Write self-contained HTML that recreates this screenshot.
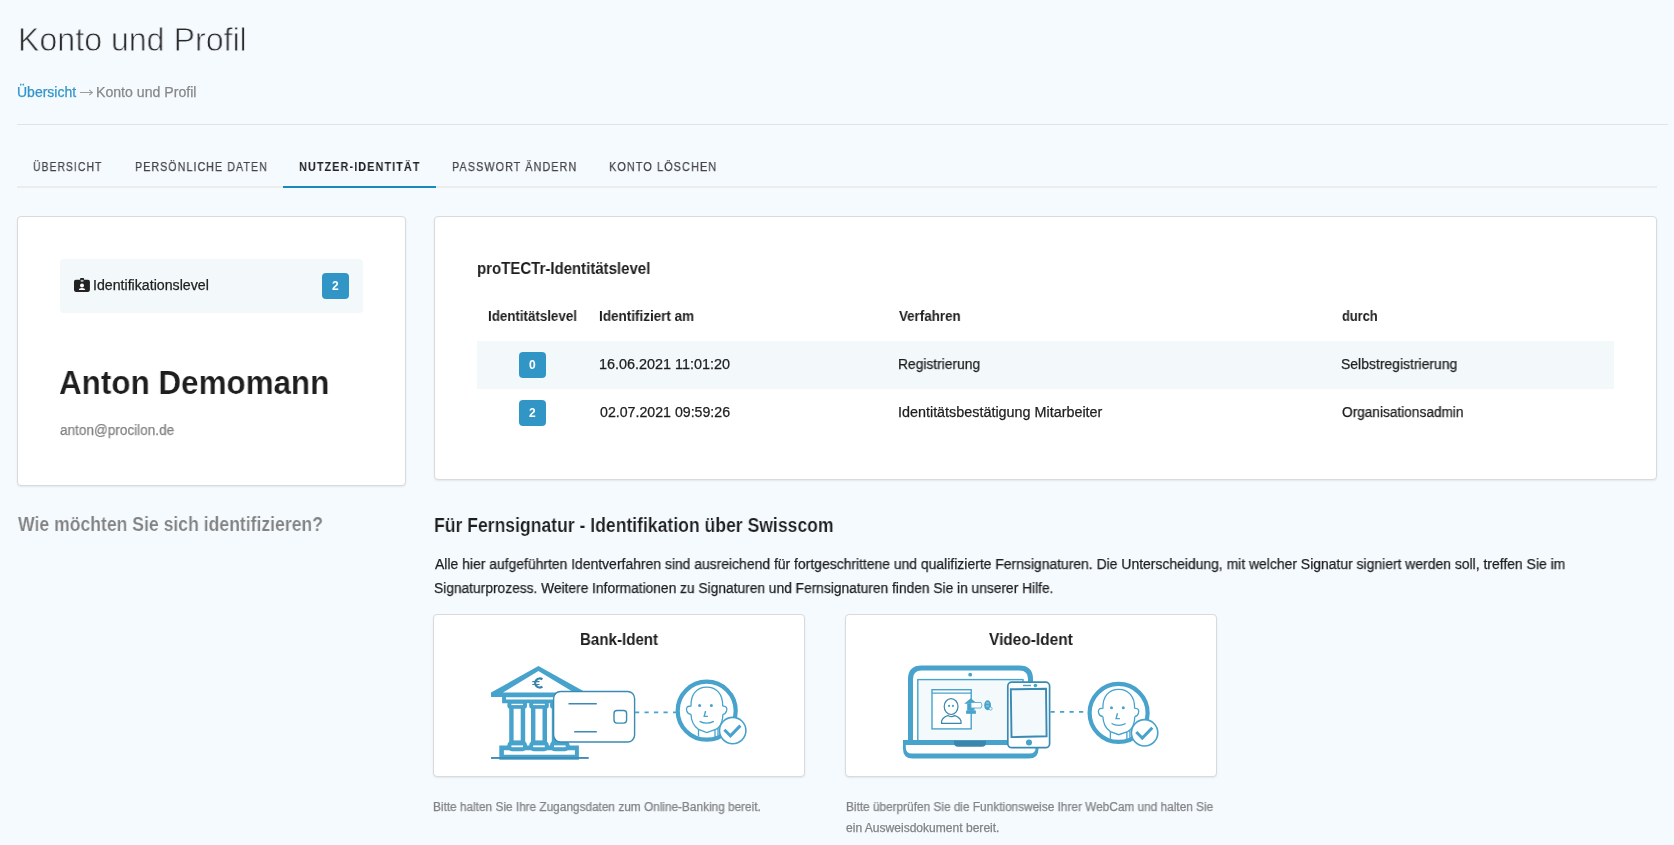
<!DOCTYPE html>
<html lang="de"><head><meta charset="utf-8"><title>Konto und Profil</title>
<style>
html,body{margin:0;padding:0;}
body{width:1674px;height:845px;overflow:hidden;background:#f5faff;position:relative;font-family:"Liberation Sans",sans-serif;}
.t{position:absolute;white-space:nowrap;line-height:1;transform-origin:0 0;will-change:transform;font-family:"Liberation Sans",sans-serif;}
.box{position:absolute;box-sizing:border-box;}
.card{position:absolute;box-sizing:border-box;background:#fff;border:1px solid #d8dadc;border-radius:4px;box-shadow:0 1px 2px rgba(0,0,0,0.08);}
.badge{position:absolute;width:27px;height:26px;border-radius:4px;background:#3196c6;}
svg{position:absolute;left:0;top:0;}
</style></head><body>

<div class="box" style="left:17px;top:124px;width:1651px;height:1px;background:#e1e3e4"></div>
<div class="box" style="left:17px;top:186px;width:1640px;height:2px;background:#ececec"></div>
<div class="box" style="left:283px;top:186px;width:153px;height:2px;background:#1a89bf"></div>
<div class="card" style="left:17px;top:216px;width:389px;height:270px"></div>
<div class="box" style="left:60px;top:259px;width:303px;height:54px;background:#f3f8fb;border-radius:4px"></div>
<div class="badge" style="left:322px;top:273px"></div>
<div class="card" style="left:434px;top:216px;width:1223px;height:264px"></div>
<div class="box" style="left:477px;top:341px;width:1137px;height:48px;background:#f3f8fb"></div>
<div class="badge" style="left:519px;top:352px"></div>
<div class="badge" style="left:519px;top:400px"></div>
<div class="card" style="left:433px;top:614px;width:372px;height:163px"></div>
<div class="card" style="left:845px;top:614px;width:372px;height:163px"></div>
<svg width="1674" height="845" viewBox="0 0 1674 845">
 <path d="M80 92.5 L92.3 92.5 M89.2 89.9 L92.4 92.5 L89.2 95.1" fill="none" stroke="#9c9c9c" stroke-width="1.1"/>
 <g transform="translate(74 278)">
  <rect x="0" y="1.7" width="15.9" height="12.2" rx="1.8" fill="#222"/>
  <rect x="6.1" y="0" width="4" height="3.6" rx="0.8" fill="#222"/>
  <rect x="6.7" y="1.9" width="2.8" height="1.8" fill="#bbb"/>
  <circle cx="8" cy="7.6" r="2" fill="#fff"/>
  <path d="M4.8 12.1 Q5 9.9 8 9.9 Q11 9.9 11.2 12.1 Z" fill="#fff"/>
 </g>
 
<g fill="#47a3cc">
 <path d="M499.3 745.5 L578.9 745.5 L578.9 759.7 L499.3 759.7 Z M503.9 750.3 L574.9 750.3 L574.9 754.8 L503.9 754.8 Z" fill-rule="evenodd"/>
 <path d="M538.4 666 L586 692.5 L586 697 L491 697 L491 692.5 Z M538.4 671 L503 692.5 L574 692.5 Z" fill-rule="evenodd"/>
 <path d="M502.1 696 L576 696 L576 703.3 L502.1 703.3 Z M506 697.2 L576 697.2 L576 699.4 L506 699.4 Z" fill-rule="evenodd"/>
 <rect x="507.4" y="701.2" width="19.6" height="7.6" rx="3"/><rect x="509.2" y="706" width="16" height="36"/><rect x="507.4" y="740.6" width="19.6" height="10.6" rx="4.6"/><rect x="529.2" y="701.2" width="19.6" height="7.6" rx="3"/><rect x="531.0" y="706" width="16" height="36"/><rect x="529.2" y="740.6" width="19.6" height="10.6" rx="4.6"/><rect x="550.0" y="701.2" width="19.6" height="7.6" rx="3"/><rect x="551.8" y="706" width="16" height="36"/><rect x="550.0" y="740.6" width="19.6" height="10.6" rx="4.6"/>
</g>
<g fill="#fff"><rect x="513.6" y="708.8" width="7.1" height="31.6"/><rect x="511.4" y="703.8" width="11.6" height="1.3"/><rect x="511.4" y="745.4" width="11.6" height="1.8"/><rect x="535.4" y="708.8" width="7.1" height="31.6"/><rect x="533.2" y="703.8" width="11.6" height="1.3"/><rect x="533.2" y="745.4" width="11.6" height="1.8"/><rect x="556.2" y="708.8" width="7.1" height="31.6"/><rect x="554.0" y="703.8" width="11.6" height="1.3"/><rect x="554.0" y="745.4" width="11.6" height="1.8"/></g>
<rect x="491" y="757" width="97.7" height="1.9" fill="#3f8db5"/>
<path d="M542.4 679.4 A4.5 4.5 0 1 0 542.4 686.6" fill="none" stroke="#3683ab" stroke-width="2.3"/><path d="M532.3 681.7 L539.5 681.7 M532.3 684.5 L539.5 684.5" stroke="#3683ab" stroke-width="1.2"/>
<rect x="553.6" y="691.5" width="81" height="50.5" rx="7" fill="#fff" stroke="#3a8ab3" stroke-width="1.4"/>
<path d="M568.5 703.7 L596.8 703.7 M574.2 731.8 L596.8 731.8" stroke="#3a8ab3" stroke-width="1.5"/>
<rect x="614" y="710.5" width="12.6" height="12.6" rx="3" fill="none" stroke="#3a8ab3" stroke-width="1.4"/>
<path d="M635 712.4 L676 712.4" stroke="#47a3cc" stroke-width="1.6" stroke-dasharray="4.2 5.3"/>

<g fill="none" stroke="#47a3cc">
 <circle cx="706.7" cy="710.7" r="29" stroke-width="4.2"/>
 <path stroke-width="1.3" d="M691 706.5 C690.5 694 697 687.2 706.8 687.2 C716.5 687.2 723 694 722.7 706.2 M690.8 706.4 C687 705.5 685.8 708.5 686.8 711 C687.6 713.3 689.5 714.3 691 714.3 M722.6 706.2 C726.5 705.5 727.5 708.5 726.5 711 C725.7 713.3 724.3 714.3 722.9 714.3 M691 714.3 C691.2 721 693.5 726 698.5 729.4 L706.8 732.5 L715.7 729.4 C717.5 728.5 718.5 727.5 719.5 726.3 M722.9 714.3 C722.8 719 722 723 719.5 726.3 M698.5 729.4 L698.5 736.5 M715 729.6 L715 737 M718 728 L718 735.5"/>
 <path stroke-width="1.4" d="M699.6 721.3 Q706.7 725 713.8 721.3"/>
 <path stroke-width="1.4" d="M705.6 711 L704.2 716.4 L708 716.4"/>
</g>
<g fill="#47a3cc"><circle cx="699.6" cy="705.5" r="1.5"/><circle cx="711.4" cy="705.5" r="1.5"/></g>
<circle cx="732.7" cy="730.6" r="13.2" fill="#fff" stroke="#47a3cc" stroke-width="1.6"/>
<path d="M724.4 729.8 L730.4 735.9 L740.4 725.6" fill="none" stroke="#47a3cc" stroke-width="3"/>

 
<path fill="none" stroke="#47a3cc" stroke-width="5" d="M910.5 741 L910.5 679 Q910.5 668 921.5 668 L1019.5 668 Q1030.5 668 1030.5 679 L1030.5 741"/>
<rect x="917.8" y="679.6" width="105.2" height="61.5" fill="#f4f9fc" stroke="#47a3cc" stroke-width="1.4"/>
<path fill="#47a3cc" fill-rule="evenodd" d="M903 740.1 L1038.5 740.1 L1038.5 749 Q1038.5 758.6 1029 758.6 L912.5 758.6 Q903 758.6 903 749 Z M905.8 745.1 L1035.7 745.1 L1035.7 747.6 Q1035.7 753.6 1029.7 753.6 L911.8 753.6 Q905.8 753.6 905.8 747.6 Z"/>
<path d="M954 740.8 L986 740.8 L986 742.8 Q986 746.8 982 746.8 L958 746.8 Q954 746.8 954 742.8 Z" fill="#3a86ad"/>
<circle cx="970.2" cy="674.7" r="1.9" fill="#47a3cc"/>
<rect x="932" y="689.7" width="39.2" height="39.2" fill="#fff" stroke="#47a3cc" stroke-width="1.4"/>
<path d="M932 693.1 L971.2 693.1" stroke="#47a3cc" stroke-width="1.2"/>
<g fill="none" stroke="#3a86ad" stroke-width="1.2">
 <ellipse cx="951.1" cy="706.6" rx="6.9" ry="7.9"/>
 <path d="M941.6 723.4 L941.6 721 Q943 717 947.8 715.6 Q951 717.6 954.7 715.6 Q959.6 717 961 721 L961 723.4 Z"/>
</g>
<g fill="#47a3cc"><circle cx="949.1" cy="705.9" r="1.1"/><circle cx="952.9" cy="705.9" r="1.1"/></g>
<g fill="#47a3cc">
 <path d="M964.2 703.7 L970.8 698.2 L977.3 703.7 Z"/>
 <rect x="967.2" y="703.5" width="7.3" height="7.2"/>
 <rect x="966.1" y="710.5" width="9.8" height="3.3"/>
</g>
<path d="M971 702.5 L981 702.5 Q983 705 981 708 L971 708 Z" fill="#fff" stroke="#5aaad0" stroke-width="0.9"/>
<ellipse cx="987.6" cy="705.3" rx="3.4" ry="5" fill="#47a3cc"/>
<path d="M986 703 L989 703 M986 706 L989 706" stroke="#bfe0ef" stroke-width="0.8"/>
<circle cx="990.6" cy="708.6" r="1.5" fill="#fff" stroke="#47a3cc" stroke-width="0.8"/>
<rect x="1007.8" y="682.2" width="41.8" height="65.5" rx="4" fill="#fff" stroke="#3a8ab3" stroke-width="1.7"/>
<path d="M1010.8 689.3 L1046 688.7 L1046.6 736.3 L1011.5 737.1 Z" fill="#f4f9fc" stroke="#3a8ab3" stroke-width="1.9"/>
<path d="M1023 685.5 L1031 685.5" stroke="#47a3cc" stroke-width="1.4"/>
<circle cx="1035.4" cy="685.5" r="1.8" fill="#47a3cc"/>
<circle cx="1029" cy="742.6" r="3" fill="#47a3cc"/>
<path d="M1050.5 711.9 L1088 711.9" stroke="#47a3cc" stroke-width="1.6" stroke-dasharray="4.2 5.3"/>
<g transform="translate(411.9 2.2)">
<g fill="none" stroke="#47a3cc">
 <circle cx="706.7" cy="710.7" r="29" stroke-width="4.2"/>
 <path stroke-width="1.3" d="M691 706.5 C690.5 694 697 687.2 706.8 687.2 C716.5 687.2 723 694 722.7 706.2 M690.8 706.4 C687 705.5 685.8 708.5 686.8 711 C687.6 713.3 689.5 714.3 691 714.3 M722.6 706.2 C726.5 705.5 727.5 708.5 726.5 711 C725.7 713.3 724.3 714.3 722.9 714.3 M691 714.3 C691.2 721 693.5 726 698.5 729.4 L706.8 732.5 L715.7 729.4 C717.5 728.5 718.5 727.5 719.5 726.3 M722.9 714.3 C722.8 719 722 723 719.5 726.3 M698.5 729.4 L698.5 736.5 M715 729.6 L715 737 M718 728 L718 735.5"/>
 <path stroke-width="1.4" d="M699.6 721.3 Q706.7 725 713.8 721.3"/>
 <path stroke-width="1.4" d="M705.6 711 L704.2 716.4 L708 716.4"/>
</g>
<g fill="#47a3cc"><circle cx="699.6" cy="705.5" r="1.5"/><circle cx="711.4" cy="705.5" r="1.5"/></g>
<circle cx="732.7" cy="730.6" r="13.2" fill="#fff" stroke="#47a3cc" stroke-width="1.6"/>
<path d="M724.4 729.8 L730.4 735.9 L740.4 725.6" fill="none" stroke="#47a3cc" stroke-width="3"/>
</g>

</svg>
<div class="t" style="left:18.05px;top:23px;font-size:33px;font-weight:normal;color:#2a2a2a;letter-spacing:0px;transform:scaleX(0.9740);-webkit-text-stroke:0.8px #f5faff">Konto und Profil</div>
<div class="t" style="left:17.00px;top:85px;font-size:14px;font-weight:normal;color:#3395c8;letter-spacing:0px;transform:scaleX(1.0000);-webkit-text-stroke:0.25px #3395c8">Übersicht</div>
<div class="t" style="left:95.99px;top:85px;font-size:14px;font-weight:normal;color:#888;letter-spacing:0px;transform:scaleX(1.0082);-webkit-text-stroke:0.25px #888">Konto und Profil</div>
<div class="t" style="left:33.00px;top:160px;font-size:13px;font-weight:normal;color:#444;letter-spacing:1.3px;transform:scaleX(0.7988);-webkit-text-stroke:0.25px #444">ÜBERSICHT</div>
<div class="t" style="left:134.68px;top:160px;font-size:13px;font-weight:normal;color:#444;letter-spacing:1.3px;transform:scaleX(0.8208);-webkit-text-stroke:0.25px #444">PERSÖNLICHE DATEN</div>
<div class="t" style="left:298.57px;top:160px;font-size:13px;font-weight:bold;color:#222;letter-spacing:1.3px;transform:scaleX(0.8340);">NUTZER-IDENTITÄT</div>
<div class="t" style="left:451.87px;top:160px;font-size:13px;font-weight:normal;color:#444;letter-spacing:1.3px;transform:scaleX(0.8304);-webkit-text-stroke:0.25px #444">PASSWORT ÄNDERN</div>
<div class="t" style="left:608.66px;top:160px;font-size:13px;font-weight:normal;color:#444;letter-spacing:1.3px;transform:scaleX(0.8365);-webkit-text-stroke:0.25px #444">KONTO LÖSCHEN</div>
<div class="t" style="left:93.19px;top:278px;font-size:14px;font-weight:normal;color:#1e1e1e;letter-spacing:0px;transform:scaleX(1.0124);-webkit-text-stroke:0.25px #1e1e1e">Identifikationslevel</div>
<div class="t" style="left:59.45px;top:366px;font-size:33px;font-weight:bold;color:#1e1e1e;letter-spacing:0px;transform:scaleX(0.9514);-webkit-text-stroke:0.15px #fff">Anton Demomann</div>
<div class="t" style="left:60.40px;top:423px;font-size:14px;font-weight:normal;color:#828282;letter-spacing:0px;transform:scaleX(0.9695);-webkit-text-stroke:0.25px #828282">anton@procilon.de</div>
<div class="t" style="left:476.56px;top:261px;font-size:16px;font-weight:bold;color:#1e1e1e;letter-spacing:0px;transform:scaleX(0.9372);">proTECTr-Identitätslevel</div>
<div class="t" style="left:487.65px;top:309px;font-size:14px;font-weight:bold;color:#1e1e1e;letter-spacing:0px;transform:scaleX(0.9522);">Identitätslevel</div>
<div class="t" style="left:598.74px;top:309px;font-size:14px;font-weight:bold;color:#1e1e1e;letter-spacing:0px;transform:scaleX(0.9629);">Identifiziert am</div>
<div class="t" style="left:899.20px;top:309px;font-size:14px;font-weight:bold;color:#1e1e1e;letter-spacing:0px;transform:scaleX(0.9547);">Verfahren</div>
<div class="t" style="left:1342.00px;top:309px;font-size:14px;font-weight:bold;color:#1e1e1e;letter-spacing:0px;transform:scaleX(0.9184);">durch</div>
<div class="t" style="left:598.57px;top:357px;font-size:14px;font-weight:normal;color:#1e1e1e;letter-spacing:0px;transform:scaleX(1.0286);-webkit-text-stroke:0.25px #1e1e1e">16.06.2021 11:01:20</div>
<div class="t" style="left:898.21px;top:357px;font-size:14px;font-weight:normal;color:#1e1e1e;letter-spacing:0px;transform:scaleX(0.9854);-webkit-text-stroke:0.25px #1e1e1e">Registrierung</div>
<div class="t" style="left:1341.00px;top:357px;font-size:14px;font-weight:normal;color:#1e1e1e;letter-spacing:0px;transform:scaleX(0.9957);-webkit-text-stroke:0.25px #1e1e1e">Selbstregistrierung</div>
<div class="t" style="left:599.60px;top:405px;font-size:14px;font-weight:normal;color:#1e1e1e;letter-spacing:0px;transform:scaleX(1.0125);-webkit-text-stroke:0.25px #1e1e1e">02.07.2021 09:59:26</div>
<div class="t" style="left:898.17px;top:405px;font-size:14px;font-weight:normal;color:#1e1e1e;letter-spacing:0px;transform:scaleX(1.0258);-webkit-text-stroke:0.25px #1e1e1e">Identitätsbestätigung Mitarbeiter</div>
<div class="t" style="left:1342.00px;top:405px;font-size:14px;font-weight:normal;color:#1e1e1e;letter-spacing:0px;transform:scaleX(0.9758);-webkit-text-stroke:0.25px #1e1e1e">Organisationsadmin</div>
<div class="t" style="left:17.50px;top:514px;font-size:20px;font-weight:bold;color:#828282;letter-spacing:0px;transform:scaleX(0.8801);-webkit-text-stroke:0.15px #f5faff">Wie möchten Sie sich identifizieren?</div>
<div class="t" style="left:433.62px;top:515px;font-size:20px;font-weight:bold;color:#1e1e1e;letter-spacing:0px;transform:scaleX(0.8790);-webkit-text-stroke:0.15px #f5faff">Für Fernsignatur - Identifikation über Swisscom</div>
<div class="t" style="left:434.50px;top:557px;font-size:14px;font-weight:normal;color:#1e1e1e;letter-spacing:0px;transform:scaleX(0.9943);-webkit-text-stroke:0.25px #1e1e1e">Alle hier aufgeführten Identverfahren sind ausreichend für fortgeschrittene und qualifizierte Fernsignaturen. Die Unterscheidung, mit welcher Signatur signiert werden soll, treffen Sie im</div>
<div class="t" style="left:433.52px;top:581px;font-size:14px;font-weight:normal;color:#1e1e1e;letter-spacing:0px;transform:scaleX(0.9830);-webkit-text-stroke:0.25px #1e1e1e">Signaturprozess. Weitere Informationen zu Signaturen und Fernsignaturen finden Sie in unserer Hilfe.</div>
<div class="t" style="left:579.66px;top:632px;font-size:16px;font-weight:bold;color:#1e1e1e;letter-spacing:0px;transform:scaleX(0.9439);">Bank-Ident</div>
<div class="t" style="left:989.00px;top:632px;font-size:16px;font-weight:bold;color:#1e1e1e;letter-spacing:0px;transform:scaleX(0.9655);">Video-Ident</div>
<div class="t" style="left:433.42px;top:801px;font-size:12px;font-weight:normal;color:#828282;letter-spacing:0px;transform:scaleX(0.9849);-webkit-text-stroke:0.25px #828282">Bitte halten Sie Ihre Zugangsdaten zum Online-Banking bereit.</div>
<div class="t" style="left:845.51px;top:801px;font-size:12px;font-weight:normal;color:#828282;letter-spacing:0px;transform:scaleX(0.9852);-webkit-text-stroke:0.25px #828282">Bitte überprüfen Sie die Funktionsweise Ihrer WebCam und halten Sie</div>
<div class="t" style="left:845.80px;top:822px;font-size:12px;font-weight:normal;color:#828282;letter-spacing:0px;transform:scaleX(1.0046);-webkit-text-stroke:0.25px #828282">ein Ausweisdokument bereit.</div>
<div class="t" style="left:332.00px;top:280px;font-size:12px;font-weight:bold;color:#fff;letter-spacing:0px;transform:scaleX(1.0000);">2</div>
<div class="t" style="left:529.00px;top:359px;font-size:12px;font-weight:bold;color:#fff;letter-spacing:0px;transform:scaleX(1.0000);">0</div>
<div class="t" style="left:529.00px;top:407px;font-size:12px;font-weight:bold;color:#fff;letter-spacing:0px;transform:scaleX(1.0000);">2</div>

</body></html>
